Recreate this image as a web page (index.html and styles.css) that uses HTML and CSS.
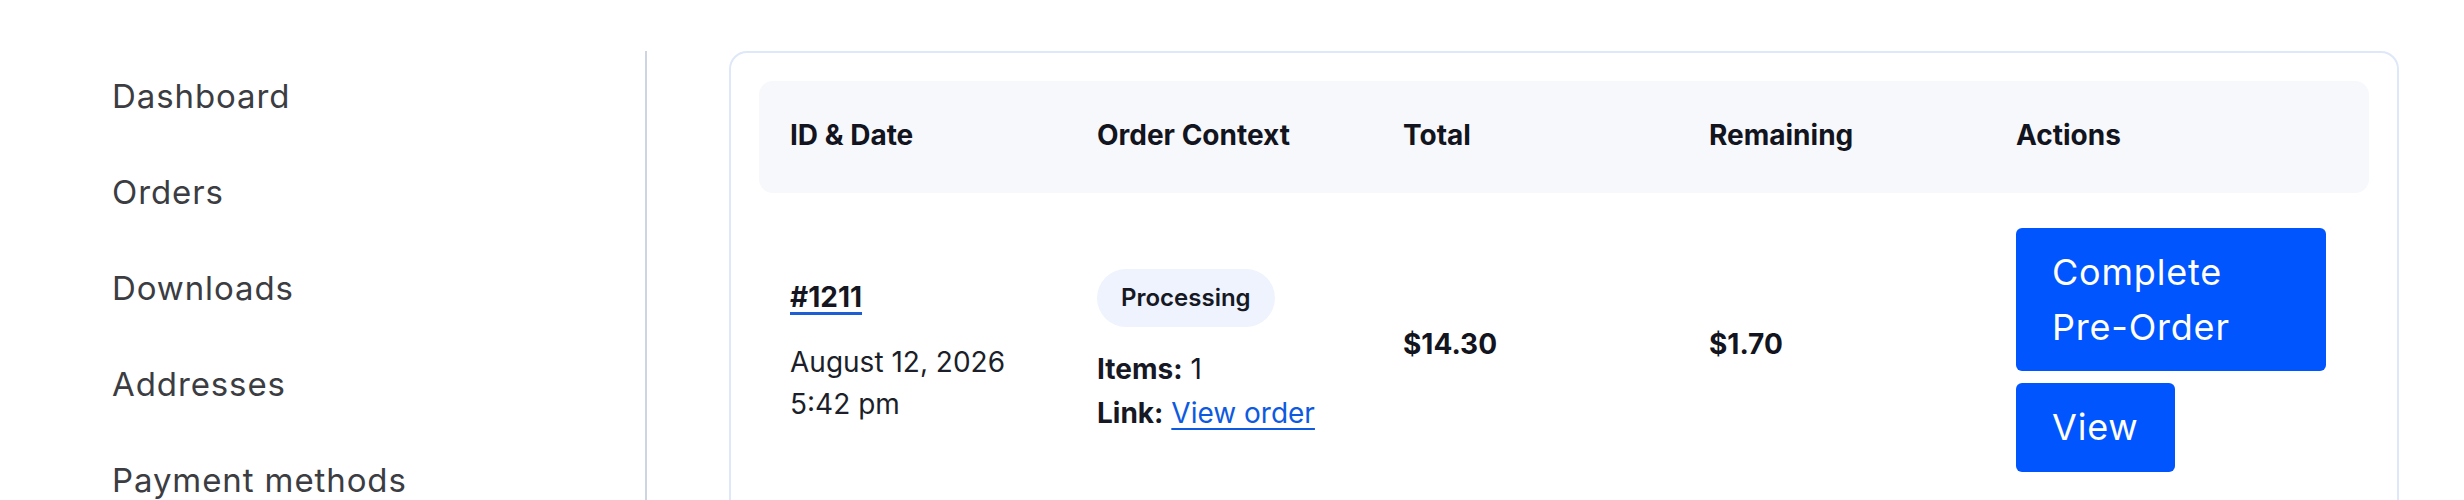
FILE: index.html
```html
<!DOCTYPE html>
<html lang="en">
<head>
<meta charset="utf-8">
<title>My account – Orders</title>
<link rel="stylesheet" href="styles.css">
</head>
<body>
<div class="layout">
  <aside class="sidebar">
    <nav>
      <ul class="nav-list">
        <li><a href="#">Dashboard</a></li>
        <li><a href="#">Orders</a></li>
        <li><a href="#">Downloads</a></li>
        <li><a href="#">Addresses</a></li>
        <li><a href="#">Payment methods</a></li>
      </ul>
    </nav>
  </aside>
  <main class="content">
    <div class="card">
      <div class="table">
        <div class="thead">
          <div class="th">ID &amp; Date</div>
          <div class="th">Order Context</div>
          <div class="th">Total</div>
          <div class="th">Remaining</div>
          <div class="th">Actions</div>
        </div>
        <div class="row">
          <div class="td id-cell">
            <a class="order-id" href="#">#1211</a>
            <div class="date">August 12, 2026<br>5:42 pm</div>
          </div>
          <div class="td context-cell">
            <span class="badge">Processing</span>
            <div class="meta"><strong>Items:</strong> 1</div>
            <div class="meta"><strong>Link:</strong> <a class="link" href="#">View order</a></div>
          </div>
          <div class="td amount">$14.30</div>
          <div class="td amount">$1.70</div>
          <div class="td actions">
            <a class="btn" href="#">Complete Pre-Order</a>
            <a class="btn" href="#">View</a>
          </div>
        </div>
      </div>
    </div>
  </main>
</div>
</body>
</html>
```

FILE: styles.css
```css
* { box-sizing: border-box; }

html, body {
  margin: 0;
  padding: 0;
  background: #ffffff;
}

body {
  font-family: "Inter", "Open Sans", "Liberation Sans", sans-serif;
  color: #161824;
  width: 2464px;
  height: 500px;
  overflow: hidden;
}

a { text-decoration: none; color: inherit; }

.layout {
  display: flex;
  align-items: flex-start;
  padding-top: 51px;
}

/* Sidebar */
.sidebar {
  width: 647px;
  flex: none;
  height: 600px;
  border-right: 2px solid #ccd5e1;
  padding-top: 21px;
  padding-left: 112px;
}

.nav-list {
  list-style: none;
  margin: 0;
  padding: 0;
  display: flex;
  flex-direction: column;
  gap: 48px;
}

.nav-list a {
  display: block;
  font-size: 33px;
  line-height: 48px;
  letter-spacing: 0.9px;
  color: #3b3d42;
}

/* Main */
.content {
  flex: none;
  margin-left: 82px;
  width: 1670px;
}

.card {
  border: 2px solid #dfe8f8;
  border-radius: 18px;
  padding: 28px;
  min-height: 600px;
}

.table {
  display: flex;
  flex-direction: column;
}

.thead,
.row {
  display: grid;
  grid-template-columns: 307px 306px 306px 307px 1fr;
}

.thead {
  background: #f6f8fb;
  border-radius: 14px;
  height: 112px;
  align-items: center;
}

.th {
  padding-left: 31px;
  padding-bottom: 5px;
  font-size: 28px;
  font-weight: 700;
  line-height: 42px;
  color: #121420;
}

.row {
  align-items: center;
}

.td {
  padding-left: 31px;
  font-size: 28px;
  line-height: 42px;
}

.order-id {
  display: block;
  width: max-content;
  font-weight: 700;
  color: #141622;
  text-decoration: underline;
  text-decoration-color: #1d5fd3;
  text-decoration-thickness: 3px;
  text-underline-offset: 5px;
  margin-bottom: 23px;
}

.date {
  color: #1c1f2a;
}

.context-cell {
  padding-top: 4px;
}

.badge {
  display: inline-block;
  background: #eef3fe;
  border-radius: 29px;
  padding: 12px 24px;
  font-size: 24px;
  line-height: 34px;
  font-weight: 600;
  color: #161824;
  margin-bottom: 20px;
}

.meta {
  line-height: 44px;
  color: #161824;
}

.meta strong { font-weight: 700; }

.link {
  color: #0d5ae0;
  text-decoration: underline;
  text-decoration-thickness: 2px;
  text-underline-offset: 5px;
}

.amount {
  font-weight: 700;
  color: #121420;
  padding-bottom: 12px;
}

.actions {
  padding: 35px 43px 36px 31px;
  display: flex;
  flex-direction: column;
  align-items: flex-start;
  gap: 12px;
}

.btn {
  display: inline-block;
  background: #0055fe;
  color: #ffffff;
  border-radius: 6px;
  padding: 17px 36px;
  font-size: 36px;
  line-height: 54.5px;
  letter-spacing: 0.8px;
}
```
